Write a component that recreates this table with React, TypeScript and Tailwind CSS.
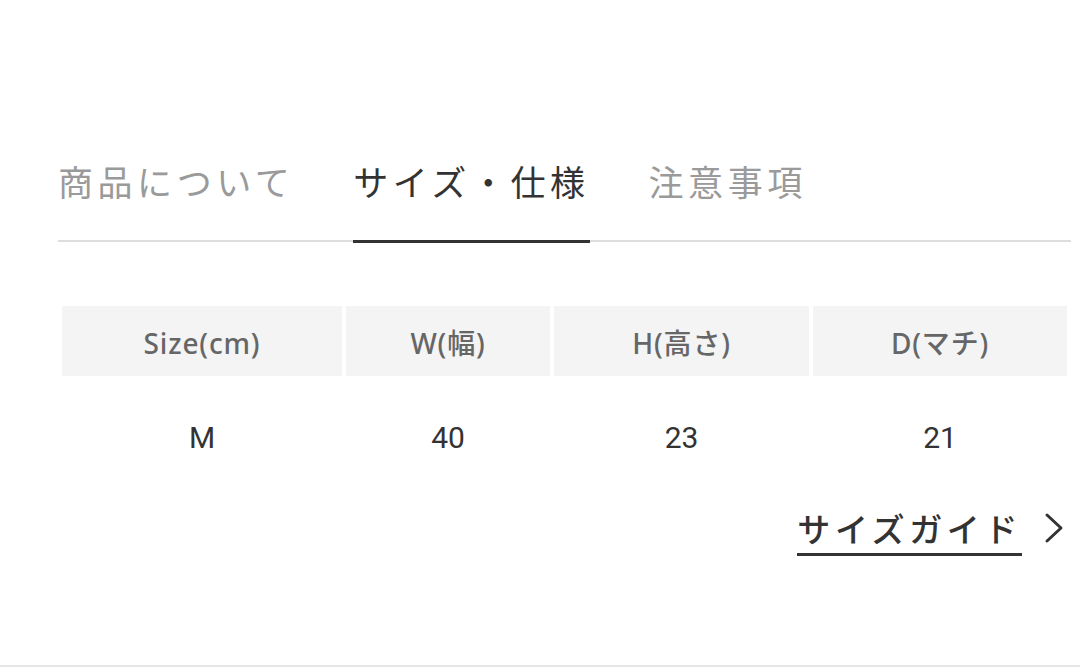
const tabs = [
  { label: "商品について", active: false },
  { label: "サイズ・仕様", active: true },
  { label: "注意事項", active: false },
];

const headers = ["Size(cm)", "W(幅)", "H(高さ)", "D(マチ)"];
const values = ["M", "40", "23", "21"];

const cjk = { fontFamily: '"Noto Sans CJK JP", "Noto Sans", sans-serif' };
const latin = { fontFamily: 'Roboto, "Noto Sans CJK JP", sans-serif' };
const head = { fontFamily: '"Noto Sans", "Noto Sans CJK JP", sans-serif' };

export default function App() {
  return (
    <div className="flex h-[667px] w-full flex-col border-b-2 border-[#e6e6e6] bg-white">
      {/* tabs */}
      <div
        className="ml-[58px] mr-[9px] mt-[154px] flex gap-[59px] border-b-2 border-[#dddddd]"
        style={cjk}
      >
        {tabs.map((tab) => (
          <div
            key={tab.label}
            className={`relative pb-[32px] text-[35px] leading-[54px] tracking-[0.13em] ${
              tab.active ? "text-[#333333]" : "text-[#9a9a9a]"
            }`}
          >
            {tab.label}
            {tab.active && (
              <span className="absolute -bottom-[3px] left-0 h-[3px] w-full bg-[#333333]" />
            )}
          </div>
        ))}
      </div>

      {/* size table */}
      <div className="mx-[58px] mt-[60px] grid grid-cols-[280px_204px_255px_254px] gap-x-[4px] px-[4px]">
        {headers.map((h) => (
          <div
            key={h}
            className="mt-[4px] flex h-[70px] items-center justify-center bg-[#f4f4f4] pt-[3px] text-[28px] font-medium tracking-[0.03em] text-[#666666]"
            style={head}
          >
            {h}
          </div>
        ))}
        {values.map((v) => (
          <div
            key={v}
            className="mt-[4px] flex h-[114px] items-center justify-center text-[30px] text-[#333333]"
            style={latin}
          >
            {v}
          </div>
        ))}
      </div>

      {/* size guide link */}
      <div className="mr-[16px] mt-[14px] flex items-center justify-end gap-[22px]">
        <a
          href="#"
          className="border-b-[3px] border-[#333333] pb-[5px] text-[33px] font-medium leading-[40px] tracking-[0.14em] text-[#333333]"
          style={cjk}
        >
          サイズガイド
        </a>
        <svg width="20" height="32" viewBox="0 0 20 32" fill="none" className="mb-[8px]">
          <polyline
            points="3,3 17,16 3,29"
            stroke="#333333"
            strokeWidth="3"
            strokeLinecap="round"
            strokeLinejoin="round"
          />
        </svg>
      </div>
    </div>
  );
}
